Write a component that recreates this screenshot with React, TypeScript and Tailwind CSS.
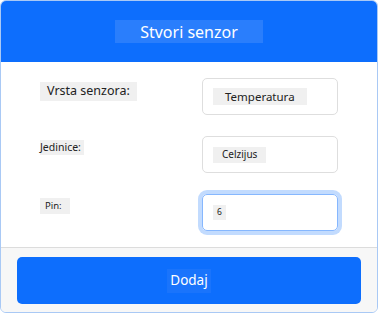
import React from 'react';

const rows = [
  { label: 'Vrsta senzora:', labelCls: 'text-[12.5px] px-[7px] mt-[4px] h-[19px]', value: 'Temperatura', valueCls: 'text-[11.5px] px-[12px] h-[17px]', focus: false },
  { label: 'Jedinice:', labelCls: 'text-[10.5px] pr-[3px] mt-[4px] h-[15px]', value: 'Celzijus', valueCls: 'text-[10px] px-[9px] h-[16px]', focus: false },
  { label: 'Pin:', labelCls: 'text-[9.5px] pl-[5px] pr-[8px] mt-[4px] h-[16px]', value: '6', valueCls: 'text-[8.5px] px-[4px] h-[15px]', focus: true },
];

export default function App() {
  return (
    <div className="w-[379px] h-[314px] bg-white" style={{ fontFamily: '"Noto Sans", "Open Sans", sans-serif' }}>
      <div className="w-[378px] h-[313px] border border-[#a9c9f5] rounded-[6px] overflow-hidden flex flex-col">
        <div className="h-[61px] bg-[#0d6efd] flex items-center justify-center shrink-0">
          <span className="bg-[#2a7efc] text-white text-[16px] w-[148px] h-[23px] flex items-center justify-center leading-none">Stvori senzor</span>
        </div>
        <div className="flex-1 pl-[39px] pr-[39px] pt-[16px] flex flex-col gap-[21px]">
          {rows.map((r) => (
            <div key={r.label} className="flex items-start justify-between">
              <span className={`bg-[#f0f0f0] text-[#222] flex items-center ${r.labelCls}`}>{r.label}</span>
              <div className={`w-[136px] h-[37px] rounded-[5px] border flex items-center pl-[10px] ${r.focus ? 'border-[#86b7fe] ring-4 ring-[#0d6efd]/25' : 'border-[#dedede]'}`}>
                <span className={`bg-[#f0f0f0] text-[#222] flex items-center ${r.valueCls}`}>{r.value}</span>
              </div>
            </div>
          ))}
        </div>
        <div className="h-[65px] bg-[#f7f7f7] border-t border-[#dcdcdc] px-[16px] pt-[9px] shrink-0">
          <div className="h-[47px] bg-[#0d6efd] rounded-[5px] flex items-center justify-center">
            <span className="bg-[#1a74fc] text-white text-[13.5px] px-[3px] h-[24px] flex items-center">Dodaj</span>
          </div>
        </div>
      </div>
    </div>
  );
}
